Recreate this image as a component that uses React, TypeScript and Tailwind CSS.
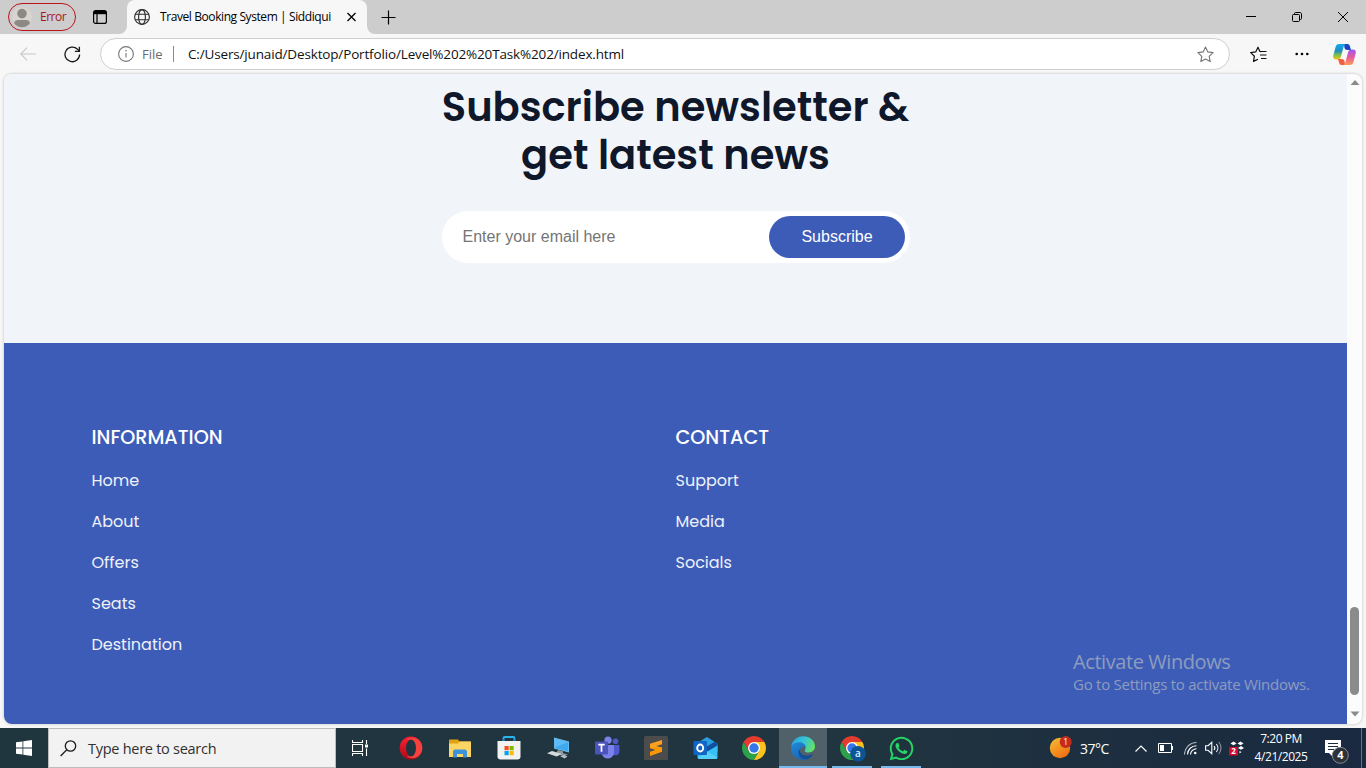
import React from "react";
import { FaWhatsapp } from "react-icons/fa";

const ui = "font-['Open_Sans','Noto_Sans',sans-serif]";
const poppins = "font-[Poppins,Inter,sans-serif]";

function TabStrip() {
  return (
    <header className={`flex h-[34px] items-center bg-[#cdcdcd] text-black ${ui}`}>
      <div className="ml-2 flex h-7 w-[68px] shrink-0 items-center rounded-full border border-[#b8141c] pl-[3px]">
        <svg width="20" height="22" viewBox="0 0 20 22">
          <circle cx="10" cy="11" r="10" fill="#d8d4d0" />
          <circle cx="10" cy="7.6" r="4.8" fill="#8c8884" />
          <path d="M2.2 17.4c0-2.4 1.6-3.4 4-3.4h7.6c2.400 0 4 1 4 3.400A10 10 0 0 1 2.200 17.400Z" fill="#8c8884" />
        </svg>
        <span className="ml-2 text-[12px] tracking-[-0.5px] text-[#a4161c]">Error</span>
      </div>
      <svg className="ml-[17px] shrink-0" width="14" height="14" viewBox="0 0 14 14" fill="none" stroke="#000">
        <rect x="0.6" y="0.600" width="12.8" height="12.800" rx="2" strokeWidth="1.200" />
        <path d="M1 2.200h12M4 4v9" strokeWidth="1.200" />
        <path d="M1 1h12v3.200H1z" fill="#000" stroke="none" />
      </svg>
      <div className="relative ml-5 flex h-[34px] w-60 shrink-0 items-center rounded-t-lg bg-[#f7f7f7]">
        <svg className="absolute bottom-0 -left-2" width="8" height="8" viewBox="0 0 8 8">
          <path d="M8 0v8H0A8 8 0 0 0 8 0Z" fill="#f7f7f7" />
        </svg>
        <svg className="absolute -right-2 bottom-0" width="8" height="8" viewBox="0 0 8 8">
          <path d="M0 0v8h8A8 8 0 0 1 0 0Z" fill="#f7f7f7" />
        </svg>
        <svg className="ml-[7px] shrink-0" width="16" height="16" viewBox="0 0 16 16" fill="none" stroke="#2b2b2b" strokeWidth="1.100">
          <circle cx="8" cy="8" r="7.400" />
          <ellipse cx="8" cy="8" rx="3.400" ry="7.400" />
          <path d="M1.200 5.300h13.600M1.200 10.700h13.600" />
        </svg>
        <span className="ml-[10px] w-[172px] whitespace-nowrap text-[12px] tracking-[-0.41px]">Travel Booking System | Siddiqui</span>
        <svg className="ml-[14px]" width="10" height="10" viewBox="0 0 10 10" stroke="#000" strokeWidth="1.300">
          <path d="m1.500 1 8 8M9.500 1l-8 8" />
        </svg>
      </div>
      <svg className="ml-[14px]" width="15" height="15" viewBox="0 0 15 15" stroke="#000" strokeWidth="1.200">
        <path d="M7.500 0.500v14M0.500 7.500h14" />
      </svg>
      <div className="mr-[18px] ml-auto flex items-center gap-9">
        <svg width="10" height="10" viewBox="0 0 10 10" stroke="#000">
          <path d="M0 4.500h10" />
        </svg>
        <svg width="10" height="10" viewBox="0 0 10 10" fill="none" stroke="#000">
          <rect x="0.500" y="2.500" width="7" height="7" rx="1" />
          <path d="M2.500 2.500V1.600C2.500 1 3 0.500 3.600 0.500H8c.8 0 1.500.7 1.500 1.500v4.400c0 .6-.5 1.100-1.100 1.100h-.9" />
        </svg>
        <svg width="10" height="10" viewBox="0 0 10 10" stroke="#000" strokeWidth="1">
          <path d="m0 0 10 10M10 0 0 10" />
        </svg>
      </div>
    </header>
  );
}

function Copilot() {
  return (
    <svg width="23" height="21" viewBox="0 0 23 21">
      <defs>
        <linearGradient id="cpA" x1="0" y1="0" x2="0" y2="1">
          <stop offset="0" stopColor="#16a8f0" />
          <stop offset="0.450" stopColor="#1c8fc0" />
          <stop offset="0.700" stopColor="#7bbf50" />
          <stop offset="1" stopColor="#f5c80c" />
        </linearGradient>
        <linearGradient id="cpB" x1="0" y1="0" x2="0" y2="1">
          <stop offset="0" stopColor="#9a58ee" />
          <stop offset="0.500" stopColor="#e85aa0" />
          <stop offset="1" stopColor="#ff9a50" />
        </linearGradient>
      </defs>
      <path d="M11 0h3.300c1.400 0 2.200.8 2.600 2.200L18 6h-3.500c-1.800 0-2.500-.7-3-2Z" fill="#1747c8" />
      <path d="M6 0h7c-1.300.3-2 1.200-2.500 3L8 12.500c-.6 2-1.500 3-3.500 3H3C.7 15.500-.3 13.800.3 11.500L2.500 3.300C3.100 1 4.200 0 6 0Z" fill="url(#cpA)" />
      <path d="M12 21H8.700c-1.400 0-2.200-.8-2.600-2.200L5 15h3.500c1.800 0 2.500.7 3 2Z" fill="#f0603c" />
      <path d="M17 21h-7c1.300-.3 2-1.200 2.500-3L15 8.500c.6-2 1.500-3 3.500-3H20c2.300 0 3.300 1.700 2.700 4l-2.200 8.200C19.900 20 18.800 21 17 21Z" fill="url(#cpB)" />
    </svg>
  );
}

function Toolbar() {
  return (
    <div className={`flex h-10 items-center bg-[#f7f7f7] ${ui}`}>
      <svg className="ml-5 shrink-0" width="16" height="14" viewBox="0 0 16 14" fill="none" stroke="#c8c8c8" strokeWidth="1.100">
        <path d="M16 7H.8M7 .6.800 7 7 13.400" />
      </svg>
      <svg className="ml-7 shrink-0" width="17" height="17" viewBox="0 0 17 17" fill="none" stroke="#1a1a1a" strokeWidth="1.300">
        <path d="M15.600 8.500A7.300 7.300 0 1 1 13.500 3.300L15.300 5" />
        <path d="M15.400.8v4.500h-4.500" />
      </svg>
      <div className="ml-[19px] flex h-8 w-[1130px] shrink-0 items-center rounded-full border border-[#cfcfcf] bg-white">
        <svg className="ml-[17px] shrink-0" width="16" height="16" viewBox="0 0 16 16" fill="none" stroke="#767676" strokeWidth="1.100">
          <circle cx="8" cy="8" r="7.400" />
          <path d="M8 7v4.600" />
          <circle cx="8" cy="4.700" r="0.500" fill="#767676" strokeWidth="0.600" />
        </svg>
        <span className="ml-[8px] w-[22px] pt-px text-[13px] text-[#6b6b6b]">File</span>
        <span className="ml-[9px] h-4 w-px bg-[#8a8a8a]" />
        <span className="ml-[14px] pt-px whitespace-nowrap text-[13.500px] tracking-[-0.155px] text-[#111]">
          C:/Users/junaid/Desktop/Portfolio/Level%202%20Task%202/index.html
        </span>
        <svg className="mr-[15px] ml-auto" width="17" height="17" viewBox="0 0 17 17" fill="none" stroke="#767676" strokeWidth="1.100" strokeLinejoin="round">
          <path d="m8.500 1 2.300 4.900 5.300.7-3.900 3.700 1 5.300-4.700-2.600-4.700 2.600 1-5.300L.9 6.600l5.300-.7Z" />
        </svg>
      </div>
      <svg className="ml-5 shrink-0" width="17" height="17" viewBox="0 0 17 17" fill="none" stroke="#111" strokeWidth="1.200" strokeLinejoin="round">
        <path d="M11.500 5.700 9.900 5.400 8 1.200 5.700 5.900.700 6.600l3.700 3.600-.9 5.200L8 13.200M11 5.500h5.500M10 9h6.500M11 12.500h5.500" />
      </svg>
      <svg className="ml-7 shrink-0" width="14" height="4" viewBox="0 0 14 4">
        <circle cx="1.700" cy="2" r="1.300" />
        <circle cx="7" cy="2" r="1.300" />
        <circle cx="12.300" cy="2" r="1.300" />
      </svg>
      <div className="ml-6">
        <Copilot />
      </div>
    </div>
  );
}

function LinkColumn({ title, links, className }: { title: string; links: string[]; className: string }) {
  return (
    <div className={className}>
      <h4 className="text-[19.200px] leading-[30px] font-medium text-white">{title}</h4>
      <ul className="mt-[7px] text-[16px] text-[#eef2f8]">
        {links.map((l) => (
          <li key={l} className="h-[41px] leading-[41px]">
            {l}
          </li>
        ))}
      </ul>
    </div>
  );
}

function Page() {
  return (
    <div className="mx-1 flex h-[650px] overflow-hidden rounded-lg bg-[#fcfcfc] shadow-[0_0_3px_rgba(0,0,0,0.25)]">
      <main className="relative flex w-[1343px] flex-col">
        <section className="flex h-[269px] flex-col items-center bg-[#f1f5f9] pt-[9px]">
          <h2 className={`w-[500px] text-center text-[40px] leading-[48px] font-semibold text-[#0f172a] ${poppins}`}>
            Subscribe newsletter &amp; get latest news
          </h2>
          <form className="mt-8 ml-px flex h-[52px] w-[468px] rounded-full bg-white p-[5px] font-['Liberation_Sans',Arial,sans-serif] text-base">
            <input className="w-[322px] bg-transparent pl-[15.500px] placeholder:text-[#757575]" placeholder="Enter your email here" />
            <button type="button" className="w-[136px] rounded-full bg-[#3d5cb8] text-white">
              Subscribe
            </button>
          </form>
        </section>
        <footer className={`flex grow bg-[#3d5cb8] pt-20 pl-[87.500px] ${poppins}`}>
          <LinkColumn className="w-[584px]" title="INFORMATION" links={["Home", "About", "Offers", "Seats", "Destination"]} />
          <LinkColumn className="w-[584px]" title="CONTACT" links={["Support", "Media", "Socials"]} />
        </footer>
        <div className={`absolute top-[576px] left-[1069px] whitespace-nowrap text-[#8e9cbd] ${ui}`}>
          <p className="text-[20px] leading-6 tracking-[-0.42px]">Activate Windows</p>
          <p className="text-[15px] leading-[21px] tracking-[-0.26px]">Go to Settings to activate Windows.</p>
        </div>
      </main>
      <div className="flex w-[15px] flex-col items-center">
        <svg className="mt-[6px]" width="10" height="6" viewBox="0 0 10 6" fill="#8a8a8a">
          <path d="M5 0 9.500 5H.500Z" />
        </svg>
        <div className="mt-[521px] h-[88px] w-[9px] rounded-full bg-[#8b8b8b]" />
        <svg className="mt-[16px]" width="10" height="6" viewBox="0 0 10 6" fill="#8a8a8a">
          <path d="M5 5.500.500.500h9Z" />
        </svg>
      </div>
    </div>
  );
}

function Chrome({ badge }: { badge?: boolean }) {
  return (
    <svg width="26" height="26" viewBox="-13 -13 26 26" className="overflow-visible">
      <path d="M-5.200 3-10.390-6A12 12 0 0 0 0 12L5.200 3Z" fill="#2da04a" />
      <path d="M0-6H10.390A12 12 0 0 1 0 12L5.200 3Z" fill="#fcc31e" />
      <path d="M-5.200 3-10.390-6A12 12 0 0 1 10.390-6H0Z" fill="#e33b2e" />
      <circle r="6" fill="#fff" />
      <circle r="4.700" fill="#3576e8" />
      {badge && (
        <>
          <circle cx="6" cy="5.800" r="7.800" fill="#0b5596" />
          <text x="6" y="9.300" fontSize="10" fontWeight="600" textAnchor="middle" fill="#d8eefc" fontFamily="Open Sans">
            a
          </text>
        </>
      )}
    </svg>
  );
}

function Opera() {
  return (
    <svg width="24" height="24" viewBox="0 0 24 24">
      <defs>
        <linearGradient id="opR" x1="0" y1="0" x2="0" y2="1">
          <stop offset="0" stopColor="#ff2035" />
          <stop offset="1" stopColor="#a80b16" />
        </linearGradient>
      </defs>
      <ellipse cx="12" cy="12" rx="11.300" ry="11.500" fill="url(#opR)" />
      <path d="M8 4.500C10-.5 23.300 1 23.300 12S10 24.500 8 19.500c3 2 8-.5 8-7.500S11 2.500 8 4.500Z" fill="#f5423f" />
      <ellipse cx="12" cy="12" rx="5" ry="8.600" fill="#20353f" />
    </svg>
  );
}

function Explorer() {
  return (
    <svg width="22" height="19" viewBox="0 0 22 19">
      <path d="M0 1.500C0 .7.400.500 1 .500h8l1.500 2H21c.6 0 1 .4 1 1V18H0Z" fill="#e3a010" />
      <path d="M0 4.500h9l1.500-2H21c.6 0 1 .4 1 1V18H0Z" fill="#fdd565" />
      <path d="M4 18.500V12l1.500-1.500h11L18 12v6.500h-4V15H8v3.500Z" fill="#3b94d9" />
    </svg>
  );
}

function Store() {
  return (
    <svg width="24" height="24" viewBox="0 0 24 24">
      <path d="M6.500 6V2.300c0-.8.500-1.300 1.300-1.300h8.400c.8 0 1.300.5 1.300 1.300V6" fill="none" stroke="#2ab4f0" strokeWidth="1.800" />
      <path d="M.5 5h23v15.500c0 2-1.200 3-3 3h-17c-1.800 0-3-1-3-3Z" fill="#f2f2f2" />
      <path d="M6.500 5V3M17.500 5V3" stroke="#1584c8" strokeWidth="1.800" />
      <path d="M7.500 10h4.200v4.200H7.500z" fill="#f25022" />
      <path d="M12.500 10h4.200v4.200h-4.200z" fill="#7fba00" />
      <path d="M7.500 15h4.200v4.200H7.500z" fill="#00a4ef" />
      <path d="M12.500 15h4.200v4.200h-4.200z" fill="#ffb900" />
    </svg>
  );
}

function RemotePc() {
  return (
    <svg width="24" height="24" viewBox="0 0 24 24">
      <path d="m8 1.500 15 4v11L8 12.500Z" fill="#7fc4ee" />
      <path d="m8.600 2.300 13.800 3.700v9.600L8.600 12Z" fill="#3fa9ee" />
      <path d="m8.600 2.300 13.800 3.700L9 11.500Z" fill="#5cbaf5" />
      <path d="m12 14 5 1.200v2l5 1.300-4 1.500-8-2.500Z" fill="#8d9aa2" />
      <path d="m6 15 10 3-5.500 2.500L1 17.200Z" fill="#d3d9dd" />
      <path d="m14 20 4-1 3.500 1.500-3 2Z" fill="#bac2c7" />
    </svg>
  );
}

function Teams() {
  return (
    <svg width="26" height="24" viewBox="0 0 26 24">
      <circle cx="21.500" cy="5.200" r="2.800" fill="#5059c9" />
      <path d="M17 9h7.500c.5 0 .9.400.9.900v6a4.300 4.300 0 0 1-8.400 0Z" fill="#5059c9" />
      <circle cx="14" cy="4.200" r="3.600" fill="#7b83eb" />
      <path d="M8 9h11.200c.5 0 .8.400.8.900v7.100a6.300 6.300 0 0 1-12.500 0Z" fill="#7b83eb" />
      <rect x="1" y="5.500" width="13" height="13" rx="1" fill="#4b53bc" />
      <path d="M4.300 8.600h6.400M7.500 8.600v7.200" stroke="#fff" strokeWidth="1.700" />
    </svg>
  );
}

function Sublime() {
  return (
    <svg width="24" height="24" viewBox="0 0 24 24">
      <rect width="24" height="24" rx="1.500" fill="#4c4c4c" />
      <path d="M18 4 6 7.800v4.200l12 3.800v-4L12.500 10 18 8.300Z" fill="#ffa01e" />
      <path d="m6 12 12-1v4.700L6 20v-4.200l5.500-1.800Z" fill="#ff9800" />
    </svg>
  );
}

function Outlook() {
  return (
    <svg width="25" height="24" viewBox="0 0 25 24">
      <path d="M4.500 7 13 1.600c.6-.4 1.200-.4 1.800 0l9.700 6.200V16h-20Z" fill="#2a9fe4" />
      <path d="M13 11 21.500 5.800 24.500 7.800v2.400L14 16.200Z" fill="#11509e" />
      <path d="M4.500 15.500h9.800l10.200-6v11.300c0 1.400-.9 2.200-2.200 2.200H6.700c-1.300 0-2.200-.8-2.200-2.200Z" fill="#35c1f3" />
      <path d="m14.300 15.500 10.200 6c-.3 1-1.100 1.500-2.200 1.500H6.700c-1 0-1.800-.5-2.100-1.300Z" fill="#54d0fa" />
      <rect x="0.500" y="5" width="13.500" height="14" rx="1" fill="#1166c4" />
      <ellipse cx="7.200" cy="12" rx="3" ry="3.500" fill="none" stroke="#fff" strokeWidth="1.900" />
    </svg>
  );
}

function Edge() {
  return (
    <svg width="24" height="24" viewBox="0 0 24 24">
      <defs>
        <linearGradient id="edT" x1="0" y1="0.300" x2="1" y2="0.600">
          <stop offset="0" stopColor="#2aa5e6" />
          <stop offset="0.500" stopColor="#35c4d4" />
          <stop offset="1" stopColor="#66e35c" />
        </linearGradient>
        <linearGradient id="edL" x1="0" y1="0" x2="0.600" y2="1">
          <stop offset="0" stopColor="#2389d8" />
          <stop offset="1" stopColor="#1766b8" />
        </linearGradient>
      </defs>
      <path d="M.3 10.500C1 4.500 6 .2 12.200.2 19 .2 24 5 24 10.300c0 4-3 6.200-6.300 6.200-3.500 0-4.500-1.300-3.700-2.600 1.700-2.800-.5-6.600-5-6.600-4 0-7 1.600-8.700 3.200Z" fill="url(#edT)" />
      <path d="M.1 12C.5 8.300 4.300 6.200 8.500 6.200c3.800 0 6.300 2.600 6.300 5.300-3-2-6.400.5-5.700 4.300.6 3.700 4.400 6.500 8.800 6.600C10 26-.5 21.500.1 12Z" fill="url(#edL)" />
      <path d="M9.200 12.500c-1.700 5.500 4.300 9.300 13 5.500-1.100 2.300-4 4.900-7 5.500-6.700-.3-9.800-6.700-6-11Z" fill="#124f96" />
    </svg>
  );
}

const apps: { name: string; icon: React.ReactNode; state?: "active" | "open" }[] = [
  { name: "opera", icon: <Opera /> },
  { name: "explorer", icon: <Explorer /> },
  { name: "store", icon: <Store /> },
  { name: "remote", icon: <RemotePc /> },
  { name: "teams", icon: <Teams /> },
  { name: "sublime", icon: <Sublime /> },
  { name: "outlook", icon: <Outlook /> },
  { name: "chrome", icon: <Chrome /> },
  { name: "edge", icon: <Edge />, state: "active" },
  { name: "chrome-profile", icon: <Chrome badge />, state: "open" },
  { name: "whatsapp", icon: <FaWhatsapp size={27} color="#25d366" />, state: "open" },
];

function Tray() {
  return (
    <div className="ml-auto flex h-10 items-center text-white">
      <svg width="24" height="24" viewBox="0 0 24 24">
        <defs>
          <linearGradient id="sun" x1="0.100" y1="0" x2="0.800" y2="1">
            <stop offset="0" stopColor="#f8bc30" />
            <stop offset="1" stopColor="#ef6a10" />
          </linearGradient>
        </defs>
        <circle cx="11" cy="12" r="10.200" fill="url(#sun)" />
        <circle cx="16.700" cy="6" r="6" fill="#c42b1c" />
        <text x="16.700" y="9.200" fontSize="8.500" textAnchor="middle" fill="#fff" fontFamily="Open Sans">
          1
        </text>
      </svg>
      <span className="ml-[7px] w-[30px] whitespace-nowrap text-[14px] tracking-[-0.5px]">37°C</span>
      <svg className="ml-[25px]" width="12" height="7" viewBox="0 0 12 7" fill="none" stroke="#fff" strokeWidth="1.200">
        <path d="M.5 6.500 6 1l5.500 5.500" />
      </svg>
      <svg className="ml-[11px]" width="15" height="10" viewBox="0 0 15 10">
        <path d="M.5.500h13v9H.500z" fill="none" stroke="#fff" />
        <path d="M2 2h4v6H2zM14 3h1v4h-1z" fill="#fff" />
      </svg>
      <svg className="ml-[11px]" width="14" height="14" viewBox="0 0 14 14" fill="none" stroke="#fff" strokeWidth="1.100">
        <path d="M.5 13.500A12 12 0 0 1 12.500 1.500" stroke="#b8bfc8" />
        <path d="M3.500 13.500A9 9 0 0 1 12.500 4.700M6.500 13.500A6 6 0 0 1 12.500 7.800" />
        <circle cx="11.200" cy="12" r="1.300" fill="#fff" stroke="none" />
      </svg>
      <svg className="ml-[7px]" width="17" height="14" viewBox="0 0 17 14" fill="none" stroke="#fff" strokeWidth="1.100">
        <path d="M.6 4.700h2.500L6.800 1.300v11.400L3.100 9.300H.600Z" />
        <path d="M9 5a3 3 0 0 1 0 4M11.300 3a6 6 0 0 1 0 8" />
        <path d="M13.700 1a9 9 0 0 1 0 12" stroke="#8a94a0" />
      </svg>
      <svg className="ml-[7px]" width="16" height="16" viewBox="0 0 16 16">
        <path d="m4.500 1.500 3 1.900-3 1.900-3-1.900ZM11.500 1.500l3 1.900-3 1.900-3-1.900ZM12 6l3 1.900-3 1.900-3-1.900ZM10.500 11l2 1-2 1.500Z" fill="#fff" />
        <rect x="0" y="7" width="9" height="8.500" rx="1.200" fill="#cf0a2c" />
        <text x="4.500" y="14.200" fontSize="8" fontWeight="700" textAnchor="middle" fill="#fff" fontFamily="Open Sans">
          2
        </text>
      </svg>
      <div className="ml-[9px] w-[54px] text-center text-[12px] leading-[18px] whitespace-nowrap">
        <p className="-mx-2 tracking-[-0.450px]">7:20 PM</p>
        <p className="-mx-2 tracking-[-0.450px]">4/21/2025</p>
      </div>
      <svg className="mt-2 ml-[16px]" width="26" height="26" viewBox="0 0 26 26">
        <path d="M1 1h16v13H8.500v3.500L5 14H1Z" fill="#fff" />
        <path d="M4 4.500h10M4 7.500h10M4 10.500h6" stroke="#1b2b3e" />
        <circle cx="16.300" cy="16.300" r="8" fill="#2d3138" stroke="#858b94" />
        <text x="16.300" y="20.300" fontSize="11" fontWeight="700" textAnchor="middle" fill="#fff" fontFamily="Open Sans">
          4
        </text>
      </svg>
      <span className="mr-1 ml-[11px] h-10 w-px bg-[#66727f]" />
    </div>
  );
}

function Taskbar() {
  return (
    <div className={`flex h-10 bg-linear-to-r from-[#20363f] via-[#20353f] via-60% to-[#1a2940] ${ui}`}>
      <div className="flex w-12 items-center justify-center">
        <svg width="16" height="16" viewBox="0 0 16 16" fill="#fff">
          <path d="M0 2.300 6.500 1.400v6.200H0ZM7.300 1.300 16 0v7.600H7.300ZM0 8.400h6.500v6.200L0 13.700ZM7.300 8.400H16V16l-8.700-1.300Z" />
        </svg>
      </div>
      <div className="flex w-72 items-center border border-[#bdbdbd] bg-[#f2f2f2] text-[#303030]">
        <svg className="ml-[11px]" width="17" height="17" viewBox="0 0 17 17" fill="none" stroke="#1a1a1a" strokeWidth="1.300">
          <circle cx="10.500" cy="6" r="5.200" />
          <path d="M6.800 9.800.600 16" />
        </svg>
        <span className="ml-[11px] pt-px text-[14.500px] tracking-[-0.27px]">Type here to search</span>
      </div>
      <div className="mr-[3px] flex w-12 items-center justify-center">
        <svg width="16" height="16" viewBox="0 0 16 16" fill="none" stroke="#fff" strokeWidth="1.100">
          <path d="M.5 0v2.500h10V0M.5 16v-2.500h10V16M.5 4.500h10v7H.500zM14.500 0v4M14.500 8.500V16" />
          <path d="M13 4.500h3v3h-3z" fill="#fff" stroke="none" />
        </svg>
      </div>
      <div className="flex gap-px">
        {apps.map((a) => (
          <div key={a.name} className={`flex w-12 flex-col items-center ${a.state === "active" ? "bg-[#50616a]" : ""}`}>
            <div className="flex h-[38px] items-center justify-center pt-[2px]">{a.icon}</div>
            {a.state && <div className={`h-[2px] bg-[#76b9ed] ${a.state === "active" ? "w-12" : "w-10"}`} />}
          </div>
        ))}
      </div>
      <Tray />
    </div>
  );
}

export default function App() {
  return (
    <div className="flex h-[768px] w-[1366px] flex-col overflow-hidden bg-[#f7f7f7]">
      <TabStrip />
      <Toolbar />
      <Page />
      <div className="h-1 shrink-0" />
      <Taskbar />
    </div>
  );
}
